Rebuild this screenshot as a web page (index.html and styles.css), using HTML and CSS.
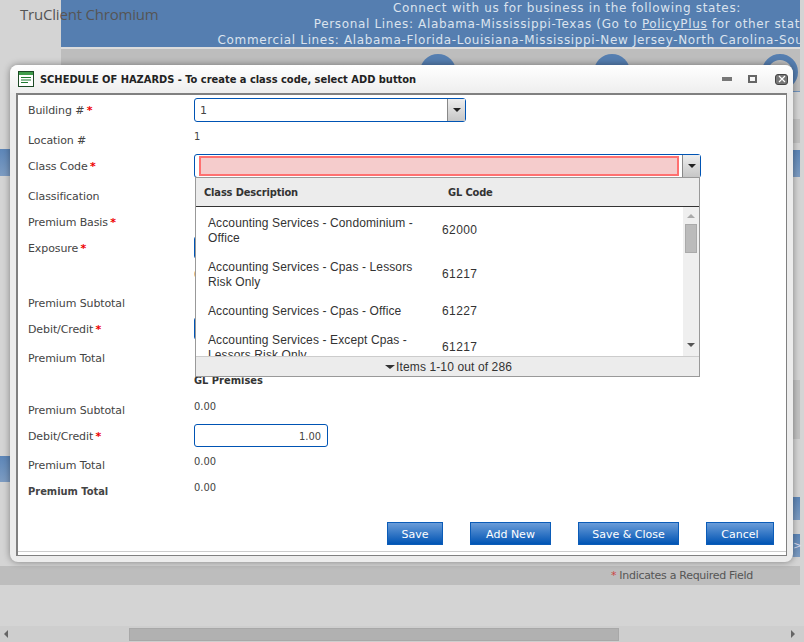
FILE: index.html
```html
<!DOCTYPE html>
<html>

<head>
    <meta charset="UTF-8">
    <title>Schedule of Hazards</title>
    <link rel="stylesheet" href="styles.css">
</head>

<body>
    <div class="page">
        <div class="app-name">TruClient Chromium</div>
        <div class="banner">
            <div class="banner-text">
                <p>Connect with us for business in the following states:</p>
                <p>Personal Lines: Alabama-Mississippi-Texas (Go to <u>PolicyPlus</u> for other states)</p>
                <p>Commercial Lines: Alabama-Florida-Louisiana-Mississippi-New Jersey-North Carolina-South Carolina-Texas</p>
            </div>
        </div>
        <div class="nav-strip">
            <span class="nav-circle nav-circle-1"></span>
            <span class="nav-circle nav-circle-2"></span>
            <span class="nav-circle nav-circle-3"></span>
        </div>
        <div class="side-tab side-tab-l1"></div>
        <div class="side-tab side-tab-l2"></div>
        <div class="side-tab side-tab-r1"></div>
        <div class="side-block side-block-r"></div>
        <div class="side-block side-block-r2"></div>
        <div class="side-tab side-tab-r2"></div>
        <div class="side-tab side-tab-r3">&gt;</div>
        <div class="required-bar"><span class="req-dim">*</span> Indicates a Required Field</div>
        <div class="hscroll">
            <span class="hscroll-left"></span>
            <span class="hscroll-thumb"></span>
            <span class="hscroll-right"></span>
        </div>

        <div class="modal">
            <div class="modal-title">
                <svg class="modal-icon" width="16" height="16" viewBox="0 0 16 16">
                    <rect x="0.5" y="0.5" width="15" height="15" fill="#fff" stroke="#1d4a26"/>
                    <rect x="1" y="1" width="14" height="3" fill="#3f9c4a"/>
                    <path d="M3 6.5h10M3 9h10M3 11.5h7" stroke="#1f7a30" stroke-width="1.2"/>
                </svg>
                <span class="modal-heading">SCHEDULE OF HAZARDS - To create a class code, select ADD button</span>
                <span class="win-min"></span>
                <span class="win-max"></span>
                <span class="win-close">
                    <svg width="8" height="8" viewBox="0 0 8 8">
                        <path d="M1 1l6 6M7 1l-6 6" stroke="#fff" stroke-width="1.2"/>
                    </svg>
                </span>
            </div>
            <div class="frame">
                <div class="form">
                    <div class="row row-30">
                        <label>Building # <em>*</em></label>
                        <div class="combo combo-short">
                            <span class="combo-value">1</span>
                            <span class="combo-btn"><i class="arrow"></i></span>
                        </div>
                    </div>
                    <div class="row row-26">
                        <label>Location #</label>
                        <div class="value">1</div>
                    </div>
                    <div class="row row-30">
                        <label>Class Code <em>*</em></label>
                        <div class="combo combo-long">
                            <span class="combo-error"></span>
                            <span class="combo-btn"><i class="arrow"></i></span>
                            <div class="dropdown">
                                <div class="dropdown-head">
                                    <span class="head-desc">Class Description</span>
                                    <span>GL Code</span>
                                </div>
                                <div class="dropdown-list">
                                    <table>
                                        <tr>
                                            <td>Accounting Services - Condominium - Office</td>
                                            <td>62000</td>
                                        </tr>
                                        <tr>
                                            <td>Accounting Services - Cpas - Lessors Risk Only</td>
                                            <td>61217</td>
                                        </tr>
                                        <tr>
                                            <td>Accounting Services - Cpas - Office</td>
                                            <td>61227</td>
                                        </tr>
                                        <tr>
                                            <td>Accounting Services - Except Cpas - Lessors Risk Only</td>
                                            <td>61217</td>
                                        </tr>
                                    </table>
                                    <div class="list-scroll">
                                        <i class="scroll-up"></i>
                                        <span class="scroll-thumb"></span>
                                        <i class="scroll-down"></i>
                                    </div>
                                </div>
                                <div class="dropdown-foot"><i class="arrow"></i> Items 1-10 out of 286</div>
                            </div>
                        </div>
                    </div>
                    <div class="row row-26">
                        <label>Classification</label>
                    </div>
                    <div class="row row-26">
                        <label>Premium Basis <em>*</em></label>
                    </div>
                    <div class="row row-26">
                        <label>Exposure <em>*</em></label>
                        <div class="field"></div>
                    </div>
                    <div class="row row-29">
                        <label></label>
                        <div class="value">0.00</div>
                    </div>
                    <div class="row row-26">
                        <label>Premium Subtotal</label>
                    </div>
                    <div class="row row-29">
                        <label>Debit/Credit <em>*</em></label>
                        <div class="field">1.00</div>
                    </div>
                    <div class="row row-26">
                        <label>Premium Total</label>
                    </div>
                    <div class="row row-26">
                        <label></label>
                        <div class="value value-bold">GL Premises</div>
                    </div>
                    <div class="row row-26">
                        <label>Premium Subtotal</label>
                        <div class="value">0.00</div>
                    </div>
                    <div class="row row-29">
                        <label>Debit/Credit <em>*</em></label>
                        <div class="field">1.00</div>
                    </div>
                    <div class="row row-26">
                        <label>Premium Total</label>
                        <div class="value">0.00</div>
                    </div>
                    <div class="row row-26">
                        <label class="label-bold">Premium Total</label>
                        <div class="value">0.00</div>
                    </div>
                </div>
                <div class="actions">
                    <button class="btn btn-save">Save</button>
                    <button class="btn btn-add">Add New</button>
                    <button class="btn btn-close">Save &amp; Close</button>
                    <button class="btn btn-cancel">Cancel</button>
                </div>
            </div>
        </div>
    </div>
</body>

</html>
```

FILE: styles.css
```css
* {
    box-sizing: border-box;
}

html,
body {
    margin: 0;
    padding: 0;
    overflow: hidden;
}

body {
    font-family: "DejaVu Sans", sans-serif;
    font-size: 11px;
    color: #444;
}

.page {
    position: relative;
    width: 804px;
    height: 642px;
    background-color: #d4d4d4;
    overflow: hidden;
}

.app-name {
    position: absolute;
    top: 4px;
    left: 20px;
    font-family: "Open Sans", sans-serif;
    font-size: 15px;
    letter-spacing: -.2px;
    line-height: 20px;
    color: #555;
}

.banner {
    width: 739px;
    height: 47px;
    margin-left: 61px;
    background-color: #557eb0;
    overflow: hidden;
}

.banner-text {
    width: 1012px;
    text-align: center;
    font-size: 12px;
    letter-spacing: .65px;
    line-height: 16px;
    color: #dbe3ee;
    white-space: nowrap;
}

.banner-text p {
    margin: 0;
}

.nav-strip {
    position: relative;
    width: 739px;
    height: 45px;
    margin-left: 61px;
    border-top: 2px solid #dcdcdc;
    border-bottom: 1px solid #6f93bf;
    background-color: #bdbdbd;
    overflow: hidden;
}

.nav-circle {
    position: absolute;
    top: 5px;
    width: 36px;
    height: 36px;
    border-radius: 50%;
    background-color: #557eb0;
}

.nav-circle-1 {
    left: 359px;
}

.nav-circle-2 {
    left: 533px;
}

.nav-circle-3 {
    left: 701px;
    border: 6px solid #557eb0;
    background-color: #bdbdbd;
}

.side-tab {
    position: absolute;
    background: linear-gradient(#5d86b8, #7d9cc2);
    color: #dde;
}

.side-tab-l1 {
    top: 149px;
    left: 0;
    width: 12px;
    height: 27px;
}

.side-tab-l2 {
    top: 456px;
    left: 0;
    width: 12px;
    height: 26px;
}

.side-tab-r1 {
    top: 150px;
    left: 790px;
    width: 10px;
    height: 27px;
}

.side-block {
    position: absolute;
    left: 790px;
    width: 10px;
    background-color: #c2c2c2;
}

.side-block-r {
    top: 119px;
    height: 24px;
}

.side-block-r2 {
    top: 380px;
    height: 59px;
}

.side-tab-r2 {
    top: 497px;
    left: 790px;
    width: 10px;
    height: 23px;
}

.side-tab-r3 {
    top: 534px;
    left: 790px;
    width: 10px;
    height: 23px;
    padding-left: 3px;
    line-height: 23px;
}

.required-bar {
    position: absolute;
    top: 566px;
    left: 0;
    width: 800px;
    height: 19px;
    padding-right: 47px;
    background-color: #bdbdbd;
    text-align: right;
    letter-spacing: -.3px;
    line-height: 19px;
    color: #555;
}

.req-dim {
    color: #c44;
}

.hscroll {
    position: absolute;
    left: 0;
    bottom: 0;
    display: flex;
    align-items: center;
    width: 804px;
    height: 16px;
    background-color: #cecece;
}

.hscroll-left {
    width: 0;
    height: 0;
    margin-left: 4px;
    border-style: solid;
    border-width: 4px 4px 4px 0;
    border-color: transparent #666 transparent transparent;
}

.hscroll-thumb {
    width: 490px;
    height: 13px;
    margin-left: 121px;
    border: 1px solid #a8a8a8;
    background-color: #b1b1b1;
}

.hscroll-right {
    width: 0;
    height: 0;
    margin-left: 172px;
    border-style: solid;
    border-width: 4px 0 4px 4px;
    border-color: transparent transparent transparent #666;
}

/* window */

.modal {
    position: absolute;
    top: 65px;
    left: 10px;
    width: 783px;
    height: 497px;
    padding: 0 6px 6px;
    border-radius: 8px;
    background-color: #ececec;
    box-shadow: 0 0 7px rgba(0, 0, 0, .4);
}

.modal-title {
    display: flex;
    align-items: center;
    height: 28px;
    margin: 0 -6px;
    padding: 0 5px 0 8px;
    border-radius: 8px 8px 0 0;
    background: linear-gradient(#fff, #eee);
}

.modal-icon {
    flex: none;
    margin-right: 6px;
}

.modal-heading {
    flex-grow: 1;
    font-family: "DejaVu Sans Condensed", "DejaVu Sans", sans-serif;
    font-stretch: condensed;
    font-weight: bold;
    font-size: 11px;
    letter-spacing: -.01px;
    color: #222;
}

.win-min {
    width: 10px;
    height: 4px;
    margin-right: 16px;
    background-color: #777;
}

.win-max {
    width: 9px;
    height: 8px;
    margin-right: 18px;
    border: 2px solid #666;
    border-top-width: 2px;
}

.win-close {
    display: flex;
    align-items: center;
    justify-content: center;
    width: 13px;
    height: 11px;
    border: 1px solid #444;
    border-radius: 3px;
    background-color: #777;
}

.frame {
    height: 463px;
    border-style: solid;
    border-color: #808080;
    border-width: 2px 1px 1px 2px;
    background-color: #fff;
}

.form {
    padding: 7px 0 0 10px;
}

.row {
    display: flex;
}

.row-26 {
    height: 26px;
}

.row-29 {
    height: 29px;
}

.row-30 {
    height: 30px;
}

.row label {
    flex: none;
    width: 166px;
    padding-top: 1px;
    letter-spacing: -.1px;
    line-height: 16px;
}

.row em {
    margin-left: -1px;
    font-style: normal;
    font-weight: bold;
    color: #e00;
}

.row .label-bold {
    font-family: "DejaVu Sans Condensed", "DejaVu Sans", sans-serif;
    font-stretch: condensed;
    font-weight: bold;
    letter-spacing: 0;
}

.value {
    margin-top: -3px;
    font-family: "DejaVu Sans Condensed", "DejaVu Sans", sans-serif;
    font-stretch: condensed;
    line-height: 16px;
}

.row-29 .value {
    margin-top: 1px;
}

.value-bold {
    font-weight: bold;
    color: #333;
}

.field {
    width: 134px;
    height: 23px;
    margin-top: -4px;
    padding-right: 6px;
    border: 1px solid #0054b4;
    border-radius: 3px;
    background-color: #fff;
    text-align: right;
    font-family: "DejaVu Sans Condensed", "DejaVu Sans", sans-serif;
    font-stretch: condensed;
    line-height: 23px;
}

.combo {
    position: relative;
    display: flex;
    align-items: center;
    height: 24px;
    margin-top: -4px;
    border: 1px solid #0054b4;
    border-radius: 3px;
    background-color: #fff;
}

.combo-short {
    width: 272px;
}

.combo-long {
    width: 507px;
}

.combo-value {
    flex-grow: 1;
    padding-left: 5px;
}

.combo-error {
    flex-grow: 1;
    height: 20px;
    margin: 0 3px 0 4px;
    border: 2px solid #ff7070;
    background-color: #f5cccc;
}

.combo-btn {
    display: flex;
    align-items: center;
    justify-content: center;
    flex: none;
    width: 18px;
    height: 22px;
    border-left: 1px solid #888;
    background: linear-gradient(#eee, #c6c6c6);
}

.arrow {
    display: inline-block;
    width: 0;
    height: 0;
    border-style: solid;
    border-width: 4px 4px 0;
    border-color: #222 transparent transparent;
}

.dropdown {
    position: absolute;
    top: 22px;
    left: 0;
    width: 505px;
    height: 200px;
    border: 1px solid #999;
    background-color: #fff;
    z-index: 2;
}

.dropdown-head {
    display: flex;
    height: 29px;
    border-bottom: 1px solid #333;
    background-color: #ececec;
    font-family: "DejaVu Sans Condensed", "DejaVu Sans", sans-serif;
    font-stretch: condensed;
    font-weight: bold;
    letter-spacing: -.15px;
    line-height: 30px;
    color: #333;
}

.head-desc {
    width: 252px;
    padding-left: 8px;
}

.dropdown-list {
    position: relative;
    height: 149px;
    padding-top: 2px;
    overflow: hidden;
}

.dropdown-list table {
    width: 300px;
    border-collapse: collapse;
    font-family: "Liberation Sans", sans-serif;
    font-size: 12px;
    letter-spacing: .12px;
    line-height: 15px;
    color: #333;
}

.dropdown-list td {
    padding: 7px 0 7px 12px;
}

.dropdown-list td:first-child {
    width: 234px;
    padding-right: 12px;
}

.dropdown-list td:last-child {
    padding: 6.5px 0 7.5px 12px;
    letter-spacing: .4px;
}

.list-scroll {
    position: absolute;
    top: 0;
    right: 0;
    display: flex;
    flex-direction: column;
    align-items: center;
    width: 16px;
    height: 149px;
    background-color: #efefef;
}

.scroll-up {
    width: 0;
    height: 0;
    margin-top: 7px;
    border-style: solid;
    border-width: 0 4px 4px;
    border-color: transparent transparent #aaa;
}

.scroll-thumb {
    width: 12px;
    height: 29px;
    margin-top: 6px;
    border: 1px solid #aaa;
    background-color: #bbb;
}

.scroll-down {
    width: 0;
    height: 0;
    margin-top: 90px;
    border-style: solid;
    border-width: 4px 4px 0;
    border-color: #555 transparent transparent;
}

.dropdown-foot {
    height: 20px;
    padding-right: 187px;
    border-top: 1px solid #ccc;
    background-color: #ececec;
    text-align: right;
    font-family: "Liberation Sans", sans-serif;
    font-size: 12px;
    letter-spacing: .12px;
    line-height: 20px;
    color: #333;
}

.dropdown-foot .arrow {
    margin-right: -2px;
    border-width: 4px 5px 0;
    vertical-align: 2px;
    border-top-color: #333;
}

.actions {
    display: flex;
    justify-content: flex-end;
    gap: 27px;
    height: 30px;
    margin-top: 13px;
    padding-right: 12px;
    border-bottom: 1px solid #ccc;
}

.btn {
    height: 23px;
    padding: 1px 0 0;
    border: 1px solid #0b5cb8;
    background: linear-gradient(#6a9cd8, #0054b4);
    font-family: "DejaVu Sans", sans-serif;
    font-size: 11px;
    color: #fff;
}

.btn-save {
    width: 56px;
}

.btn-add {
    width: 81px;
}

.btn-close {
    width: 101px;
}

.btn-cancel {
    width: 68px;
}
```
